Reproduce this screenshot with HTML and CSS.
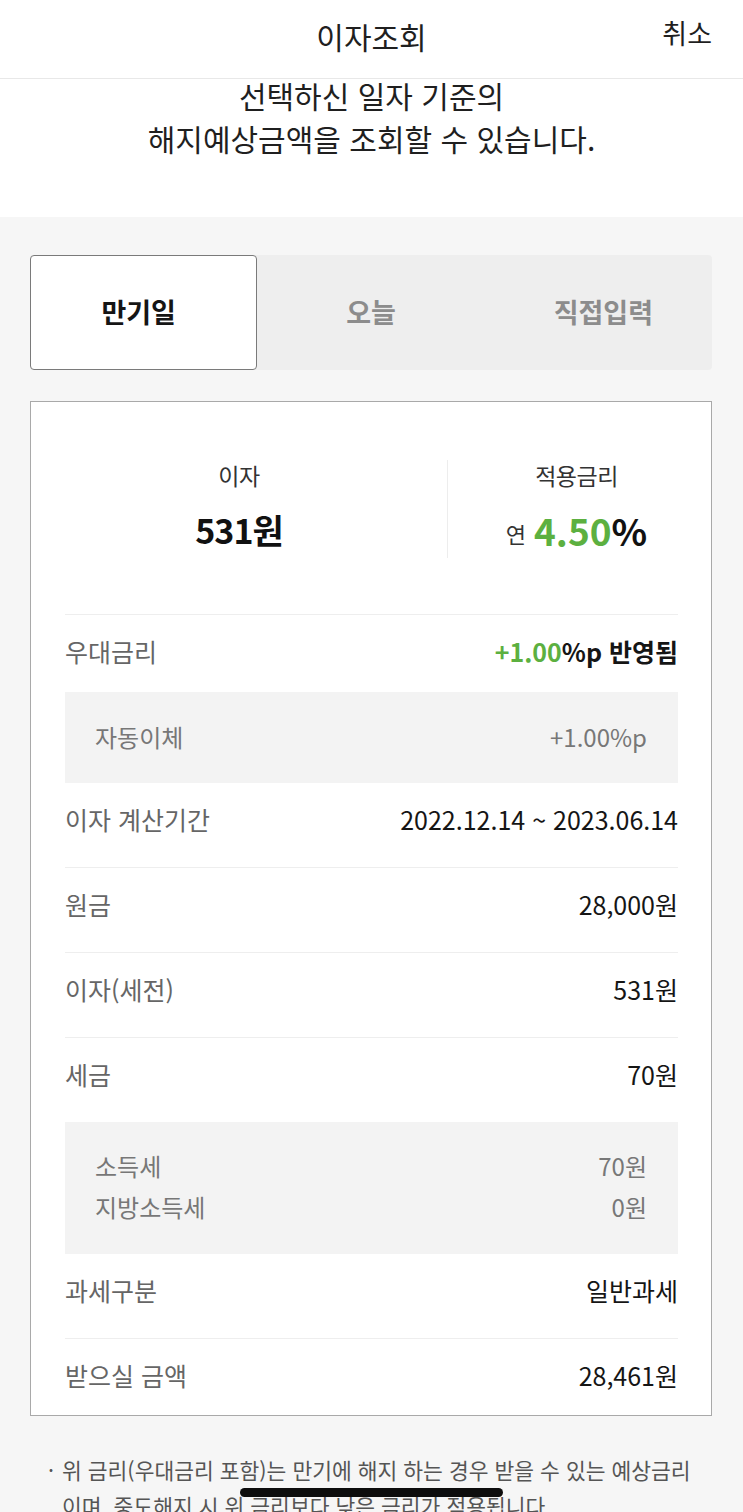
FILE: index.html
```html
<!DOCTYPE html>
<html lang="ko">
<head>
<meta charset="utf-8">
<title>이자조회</title>
<link rel="stylesheet" href="styles.css">
</head>
<body>
<header class="topbar">
  <h1 class="topbar-title">이자조회</h1>
  <button class="topbar-cancel" type="button">취소</button>
</header>

<section class="intro">
  <p>선택하신 일자 기준의<br>해지예상금액을 조회할 수 있습니다.</p>
</section>

<main class="content">
  <div class="tabs">
    <button class="tab tab-active" type="button">만기일</button>
    <button class="tab" type="button">오늘</button>
    <button class="tab tab-last" type="button">직접입력</button>
  </div>

  <div class="card">
    <div class="summary">
      <div class="sum-col">
        <div class="sum-label">이자</div>
        <div class="sum-value">531원</div>
      </div>
      <div class="sum-col sum-col-right">
        <div class="sum-label">적용금리</div>
        <div class="sum-value sum-rate"><span class="sum-prefix">연</span><span class="green">4.50</span>%</div>
      </div>
    </div>

    <div class="list">
      <div class="row row-first">
        <span class="row-label">우대금리</span>
        <span class="row-value bold"><span class="green">+1.00</span>%p 반영됨</span>
      </div>
      <div class="subbox">
        <div class="subrow">
          <span>자동이체</span>
          <span>+1.00%p</span>
        </div>
      </div>
      <div class="row">
        <span class="row-label">이자 계산기간</span>
        <span class="row-value">2022.12.14 ~ 2023.06.14</span>
      </div>
      <div class="row">
        <span class="row-label">원금</span>
        <span class="row-value">28,000원</span>
      </div>
      <div class="row">
        <span class="row-label">이자(세전)</span>
        <span class="row-value">531원</span>
      </div>
      <div class="row row-noline">
        <span class="row-label">세금</span>
        <span class="row-value">70원</span>
      </div>
      <div class="subbox subbox-tax">
        <div class="subrow">
          <span>소득세</span>
          <span>70원</span>
        </div>
        <div class="subrow">
          <span>지방소득세</span>
          <span>0원</span>
        </div>
      </div>
      <div class="row">
        <span class="row-label">과세구분</span>
        <span class="row-value">일반과세</span>
      </div>
      <div class="row row-last">
        <span class="row-label">받으실 금액</span>
        <span class="row-value">28,461원</span>
      </div>
    </div>
  </div>

  <div class="note">
    <span class="note-dot">·</span>
    <p class="note-text">위 금리(우대금리 포함)는 만기에 해지 하는 경우 받을 수 있는 예상금리<br>이며, 중도해지 시 위 금리보다 낮은 금리가 적용됩니다.</p>
  </div>
</main>

<div class="home-indicator"></div>
</body>
</html>
```

FILE: styles.css
```css
* {
  box-sizing: border-box;
}

html, body {
  margin: 0;
  padding: 0;
}

body {
  font-family: "Noto Sans CJK KR", "Noto Sans", sans-serif;
  color: #1a1a1a;
  background: #f6f6f6;
}

.topbar {
  position: relative;
  z-index: 2;
  height: 79px;
  background: #ffffff;
  border-bottom: 1px solid #e8e8e8;
  display: flex;
  align-items: center;
  justify-content: center;
  padding-bottom: 6px;
}

.topbar-title {
  margin: 0;
  font-size: 30px;
  font-weight: 400;
  color: #1f1f1f;
}

.topbar-cancel {
  position: absolute;
  right: 31px;
  top: 13px;
  border: 0;
  background: none;
  padding: 0;
  font-family: inherit;
  font-size: 27px;
  color: #1f1f1f;
}

.intro {
  background: #ffffff;
  margin-top: -5px;
  padding: 0 0 57px;
  text-align: center;
}

.intro p {
  margin: 0;
  font-size: 30px;
  line-height: 43px;
  color: #1f1f1f;
}

.content {
  padding: 38px 31px 120px 30px;
}

.tabs {
  display: grid;
  grid-template-columns: 1fr 1fr 1fr;
  height: 115px;
  background: #eeeeee;
  border-radius: 4px;
}

.tab {
  border: 0;
  background: transparent;
  font-family: inherit;
  font-size: 27px;
  font-weight: 700;
  color: #8c8c8c;
  padding: 0 0 2px;
}

.tab-active {
  background: #ffffff;
  color: #151515;
  border: 1px solid #7a7a7a;
  border-radius: 4px;
  padding-right: 10px;
}

.tab-last {
  padding-left: 10px;
}

.card {
  margin-top: 31px;
  background: #ffffff;
  border: 1px solid #a9a9a9;
}

.summary {
  display: grid;
  grid-template-columns: 416px 1fr;
  padding: 58px 0 56px;
}

.sum-col {
  text-align: center;
  padding-bottom: 5px;
}

.sum-col-right {
  border-left: 1px solid #ededed;
  padding-right: 6px;
}

.sum-label {
  font-size: 23px;
  line-height: 30px;
  color: #333333;
  letter-spacing: -0.5px;
}

.sum-value {
  margin-top: 20px;
  font-size: 34px;
  line-height: 40px;
  font-weight: 700;
  color: #111111;
  letter-spacing: -1px;
}

.sum-rate {
  font-size: 37px;
  letter-spacing: 0;
}

.sum-prefix {
  font-size: 22px;
  font-weight: 400;
  color: #333333;
  margin-right: 8px;
  vertical-align: 3px;
}

.green {
  color: #5cb040;
}

.list {
  padding: 0 33px 0 34px;
}

.row {
  display: flex;
  justify-content: space-between;
  align-items: center;
  padding: 22px 0 34px;
  border-bottom: 1px solid #eeeeee;
  font-size: 25px;
  line-height: 28px;
}

.row-first {
  border-top: 1px solid #eeeeee;
  border-bottom: 0;
  padding: 22px 0 27px;
}

.row-noline {
  border-bottom: 0;
  padding-bottom: 34px;
}

.row-last {
  border-bottom: 0;
  padding: 22px 0 26px;
}

.row-label {
  color: #666666;
}

.row-value {
  color: #151515;
}

.bold {
  font-weight: 700;
}

.subbox {
  background: #f3f3f3;
  padding: 31px 31px 32px 30px;
  font-size: 24px;
  line-height: 28px;
  color: #777777;
}

.subbox-tax {
  padding: 23px 31px 27px 30px;
  line-height: 41px;
}

.subrow {
  display: flex;
  justify-content: space-between;
}

.note {
  display: flex;
  margin-top: 36px;
  padding-left: 18px;
  color: #555555;
  font-size: 21.5px;
  line-height: 36px;
}

.note-dot {
  width: 14px;
  flex: none;
}

.note-text {
  margin: 0;
  white-space: nowrap;
}

.home-indicator {
  position: fixed;
  left: 240px;
  bottom: 15px;
  width: 263px;
  height: 9px;
  border-radius: 5px;
  background: #0d0d0d;
}
```
